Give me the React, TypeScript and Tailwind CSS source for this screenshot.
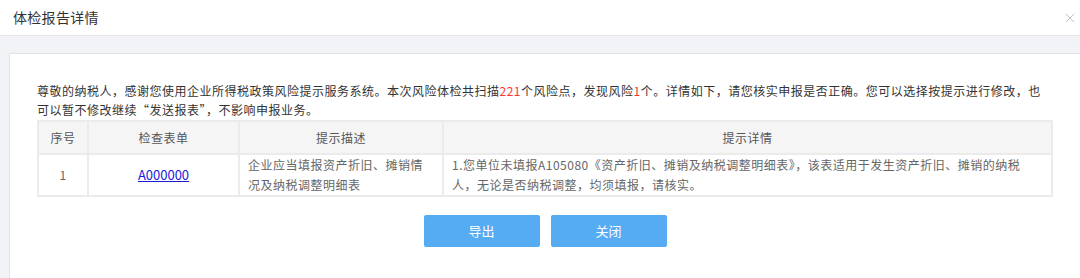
import { X } from 'lucide-react'

const font = { fontFamily: '"Microsoft YaHei", "Noto Sans CJK SC", "Noto Sans", sans-serif' }

export default function App() {
  return (
    <div className="w-[1080px] h-[278px] overflow-hidden bg-white flex flex-col" style={font}>
      <div className="h-[36px] shrink-0 flex items-center justify-between border-b border-[#e5e5e5] pl-[13px] pr-[2px]">
        <span className="text-[14px] text-[#333] tracking-[0.3px]">体检报告详情</span>
        <X className="w-[16px] h-[16px] text-[#aaa]" strokeWidth={1.1} />
      </div>
      <div className="flex-1 flex bg-[#f2f3f7] pt-[17px] pl-[9px]">
        <div className="flex-1 bg-white border-l border-t border-[#e1e2e6] pl-[27px] pr-[27px] pt-[27px]">
          <p className="text-[12px] leading-[19px] text-[#333] w-[1012px] tracking-[0.5px]">
            尊敬的纳税人，感谢您使用企业所得税政策风险提示服务系统。本次风险体检共扫描<span className="text-[#f33]">221</span>个风险点，发现风险<span className="text-[#f33]">1</span>个。详情如下，请您核实申报是否正确。您可以选择按提示进行修改，也可以暂不修改继续“发送报表”，不影响申报业务。
          </p>
          <table className="w-[1016px] border-collapse border-2 border-[#ebebeb] text-[12px] tracking-[0.5px] table-fixed mt-[1px]">
            <colgroup>
              <col className="w-[50px]" />
              <col className="w-[151px]" />
              <col className="w-[204px]" />
              <col />
            </colgroup>
            <thead>
              <tr className="bg-[#f5f5f5] h-[33px] text-[#555]">
                <th className="border-2 border-[#ebebeb] font-normal">序号</th>
                <th className="border-2 border-[#ebebeb] font-normal">检查表单</th>
                <th className="border-2 border-[#ebebeb] font-normal">提示描述</th>
                <th className="border-2 border-[#ebebeb] font-normal">提示详情</th>
              </tr>
            </thead>
            <tbody>
              <tr className="h-[40px] text-[#666] leading-[20px]">
                <td className="border-2 border-[#ebebeb] text-center">1</td>
                <td className="border-2 border-[#ebebeb] text-center">
                  <a className="text-[13px] text-[#1a1adb] underline tracking-normal">A000000</a>
                </td>
                <td className="border-2 border-[#ebebeb] pl-[8px] pr-[12px]">企业应当填报资产折旧、摊销情况及纳税调整明细表</td>
                <td className="border-2 border-[#ebebeb] pl-[8px] pr-[12px]">
                  1.您单位未填报A105080《资产折旧、摊销及纳税调整明细表》，该表适用于发生资产折旧、摊销的纳税人，无论是否纳税调整，均须填报，请核实。
                </td>
              </tr>
            </tbody>
          </table>
          <div className="flex justify-center gap-[11px] mt-[18px]">
            <button className="w-[116px] h-[32px] rounded-[2px] bg-[#55acf2] text-white text-[13px]">导出</button>
            <button className="w-[116px] h-[32px] rounded-[2px] bg-[#55acf2] text-white text-[13px]">关闭</button>
          </div>
        </div>
      </div>
    </div>
  )
}
